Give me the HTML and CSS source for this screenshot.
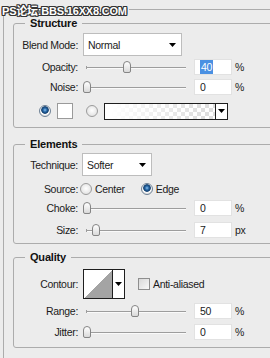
FILE: index.html
```html
<!DOCTYPE html>
<html lang="en">
<head>
    <meta charset="UTF-8">
    <title>Bevel and Emboss</title>
    <link rel="stylesheet" href="styles.css">
</head>
<body>
    <div class="watermark">PS论坛:BBS.16XX8.COM</div>

    <fieldset class="panel">
        <legend>Bevel and Emboss</legend>

        <fieldset class="group structure">
            <legend>Structure</legend>
            <div class="row row-select">
                <span class="label">Blend Mode:</span>
                <div class="select select-blend">
                    <span>Normal</span>
                    <svg class="arrow" width="7" height="4" viewBox="0 0 7 4"><path d="M0 0h7L3.5 4z"/></svg>
                </div>
            </div>
            <div class="row row-slider row-opacity">
                <span class="label">Opacity:</span>
                <div class="slider"><span class="thumb" style="left: 41px"></span></div>
                <span class="field"><span class="selected">40</span></span>
                <span class="unit">%</span>
            </div>
            <div class="row row-slider">
                <span class="label">Noise:</span>
                <div class="slider"><span class="thumb" style="left: 1px"></span></div>
                <span class="field">0</span>
                <span class="unit">%</span>
            </div>
            <div class="row row-color">
                <span class="radio checked"></span>
                <span class="swatch"></span>
                <span class="radio"></span>
                <span class="gradient">
                    <span class="gradient-fill"></span>
                    <span class="drop">
                        <svg class="arrow" width="7" height="4" viewBox="0 0 7 4"><path d="M0 0h7L3.5 4z"/></svg>
                    </span>
                </span>
            </div>
        </fieldset>

        <fieldset class="group elements">
            <legend>Elements</legend>
            <div class="row row-select">
                <span class="label">Technique:</span>
                <div class="select select-technique">
                    <span>Softer</span>
                    <svg class="arrow" width="7" height="4" viewBox="0 0 7 4"><path d="M0 0h7L3.5 4z"/></svg>
                </div>
            </div>
            <div class="row row-source">
                <span class="label">Source:</span>
                <span class="radio"></span>
                <span class="option option-center">Center</span>
                <span class="radio checked"></span>
                <span class="option">Edge</span>
            </div>
            <div class="row row-slider">
                <span class="label">Choke:</span>
                <div class="slider"><span class="thumb" style="left: 1px"></span></div>
                <span class="field">0</span>
                <span class="unit">%</span>
            </div>
            <div class="row row-slider row-size">
                <span class="label">Size:</span>
                <div class="slider"><span class="thumb" style="left: 10px"></span></div>
                <span class="field">7</span>
                <span class="unit">px</span>
            </div>
        </fieldset>

        <fieldset class="group quality">
            <legend>Quality</legend>
            <div class="row row-contour">
                <span class="label">Contour:</span>
                <span class="contour">
                    <span class="contour-curve"></span>
                    <span class="drop">
                        <svg class="arrow" width="7" height="4" viewBox="0 0 7 4"><path d="M0 0h7L3.5 4z"/></svg>
                    </span>
                </span>
                <span class="checkbox"></span>
                <span class="option">Anti-aliased</span>
            </div>
            <div class="row row-slider row-range">
                <span class="label">Range:</span>
                <div class="slider"><span class="thumb" style="left: 49px"></span></div>
                <span class="field">50</span>
                <span class="unit">%</span>
            </div>
            <div class="row row-slider row-jitter">
                <span class="label">Jitter:</span>
                <div class="slider"><span class="thumb" style="left: 1px"></span></div>
                <span class="field">0</span>
                <span class="unit">%</span>
            </div>
        </fieldset>
    </fieldset>
</body>
</html>
```

FILE: styles.css
```css
* {
    box-sizing: border-box;
}
html, body {
    margin: 0;
    padding: 0;
    width: 100%;
    height: 100%;
    overflow: hidden;
}
body {
    position: relative;
    background-color: #ececec;
    font-family: "Liberation Sans", Arial, sans-serif;
    font-size: 10.5px;
    letter-spacing: -0.3px;
    color: #1b1b1b;
}

.watermark {
    position: absolute;
    top: 5px;
    left: 2px;
    z-index: 10;
    font-family: "Liberation Sans", "Noto Sans CJK SC", sans-serif;
    font-size: 11px;
    font-weight: bold;
    letter-spacing: -0.2px;
    line-height: 13px;
    color: #fff;
    text-shadow: 1px 0 #333, -1px 0 #333, 0 1px #333, 0 -1px #333,
                 1px 1px #333, -1px -1px #333, 1px -1px #333, -1px 1px #333;
}

fieldset {
    margin: 0;
    padding: 0;
    min-width: 0;
    border: 1px solid #acacac;
    border-radius: 3px;
}
legend {
    margin-left: 11px;
    padding: 0 5px;
    font-size: 11px;
    font-weight: bold;
    letter-spacing: -0.2px;
    line-height: 13px;
    color: #111;
}

.panel {
    width: 272px;
    margin: 3px 0 0 3px;
    padding: 0 0 20px 9px;
}
.panel > legend {
    visibility: hidden;
}

.structure {
    margin-top: 1px;
    padding-bottom: 7px;
}
.elements {
    margin-top: 10px;
    padding-bottom: 3px;
}
.quality {
    margin-top: 7px;
    padding-bottom: 5px;
}

.row {
    display: flex;
    align-items: center;
    height: 20px;
}
.label {
    flex: none;
    width: 64px;
    margin-right: 4px;
    text-align: right;
}

/* dropdowns */
.row-select {
    height: 23px;
}
.structure .row-select {
    margin-top: 3px;
}
.elements .row-select {
    margin-top: 2px;
}
.select {
    display: flex;
    align-items: center;
    justify-content: space-between;
    height: 23px;
    padding: 0 5px 0 4px;
    background: #fff;
    border: 1px solid #bdbdbd;
}
.select-blend {
    width: 99px;
    margin-left: 1px;
}
.select-technique {
    width: 70px;
}
.arrow {
    display: block;
    fill: #000;
}

/* sliders */
.row-opacity {
    margin-top: 1px;
}
.row-size {
    margin-top: 2px;
}
.row-range {
    margin-top: 2px;
}
.row-jitter {
    margin-top: 1px;
}
.slider {
    position: relative;
    flex: none;
    width: 104px;
    height: 20px;
    margin-right: 8px;
}
.slider::before {
    content: "";
    position: absolute;
    left: 4px;
    right: 0;
    top: 10px;
    height: 1px;
    background: #9d9d9d;
    box-shadow: 0 1px #fafafa;
}
.slider::after {
    content: "";
    position: absolute;
    left: 4px;
    top: 9px;
    width: 1px;
    height: 3px;
    background: #9d9d9d;
}
.thumb {
    position: absolute;
    top: 4px;
    z-index: 1;
    width: 8px;
    height: 12px;
    border: 1px solid #858585;
    border-radius: 4px 4px 2px 2px;
    background: linear-gradient(#ffffff, #d9d9d9);
}
.field {
    flex: none;
    width: 38px;
    height: 16px;
    padding-left: 5px;
    line-height: 14px;
    background: #fff;
    border: 1px solid #e2e2e2;
}
.selected {
    display: inline-block;
    padding: 0 1px;
    background: #4a90e2;
    color: #fff;
}
.unit {
    margin-left: 3px;
}

/* radio buttons and swatches */
.radio {
    flex: none;
    width: 12px;
    height: 12px;
    border: 1px solid #9b9b9b;
    border-radius: 50%;
    background: radial-gradient(circle at 50% 45%, #ffffff 0, #e6e6e6 5px);
}
.radio.checked {
    border-color: #6f8296;
    background: radial-gradient(circle at 50% 40%, #8cc2ef 0, #2a6aa8 1.8px, #0f3c6c 3.4px, #ffffff 4.2px, #e3e3e3 5.5px);
}
.row-color {
    height: 18px;
    margin-top: 5px;
    padding-left: 25px;
}
.swatch {
    flex: none;
    width: 16px;
    height: 16px;
    margin: 0 13px 0 6px;
    background: #fff;
    border: 1px solid #9a9a9a;
}
.gradient {
    display: flex;
    flex: none;
    width: 124px;
    height: 17px;
    margin-left: 6px;
    border: 1px solid #1e1e1e;
    background: #fff;
}
.gradient-fill {
    flex: 1;
    background:
        linear-gradient(to right, #fff 5%, rgba(255, 255, 255, 0.2) 90%),
        conic-gradient(#d6d6d6 25%, #fff 0 50%, #d6d6d6 0 75%, #fff 0) 0 0 / 8px 8px;
}
.drop {
    display: flex;
    align-items: center;
    justify-content: center;
    flex: none;
    width: 12px;
    border-left: 1px solid #1e1e1e;
    background: #fff;
}

/* source */
.row-source {
    height: 18px;
    margin-top: 4px;
}
.row-source .label {
    margin-right: 2px;
}
.option {
    margin-left: 3px;
}
.option-center {
    margin-right: 16px;
}

/* contour */
.row-contour {
    height: 30px;
    margin-top: 5px;
}
.contour {
    display: flex;
    flex: none;
    width: 42px;
    height: 30px;
    margin-left: 1px;
    border: 1px solid #1e1e1e;
}
.contour-curve {
    flex: 1;
    background: linear-gradient(to bottom right, #fff 50%, #a4a4a4 50%);
}
.checkbox {
    flex: none;
    width: 12px;
    height: 12px;
    margin-left: 13px;
    border: 1px solid #8e8e8e;
    background: linear-gradient(135deg, #d8d8d8, #f8f8f8);
}
```
